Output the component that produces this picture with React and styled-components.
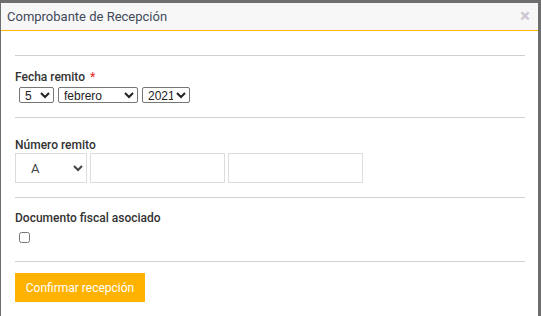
import React from 'react';
import styled, { createGlobalStyle } from 'styled-components';

const GlobalStyle = createGlobalStyle`
    html, body {
        margin: 0;
        padding: 0;
        height: 100%;
        background: #6e6e6e;
        overflow: hidden;
    }
    #root {
        height: 100%;
    }
`;

const Backdrop = styled.div`
    display: flex;
    height: 100%;
    padding: 3px 3px 0 1px;
    box-sizing: border-box;
`;

const Modal = styled.div`
    flex: 1;
    display: flex;
    flex-direction: column;
    background: #fff;
    font-family: Roboto, "Liberation Sans", sans-serif;
`;

const Header = styled.div`
    display: flex;
    align-items: center;
    justify-content: space-between;
    height: 27px;
    padding: 0 8px 0 6px;
    background: #f7f7f7;
    border-bottom: 1px solid #ffb400;
`;

const Title = styled.span`
    font-size: 13px;
    color: #3f4a5a;
`;

const Close = styled.span`
    font-size: 19px;
    font-weight: bold;
    line-height: 1;
    color: #cbc6d4;
    margin-top: -2px;
`;

const Body = styled.div`
    display: flex;
    flex-direction: column;
    align-items: flex-start;
    padding: 0 13px 0 14px;
`;

const Divider = styled.hr`
    align-self: stretch;
    border: none;
    border-top: 1px solid #d0d0d0;
    margin: ${p => p.$top || 0}px 0 0;
    height: 0;
`;

const Label = styled.label`
    display: block;
    margin-top: ${p => p.$top || 0}px;
    font-size: 12px;
    line-height: 14px;
    font-weight: 500;
    color: #333;
`;

const Required = styled.span`
    color: #e53935;
    margin-left: 5px;
`;

const DateRow = styled.div`
    display: flex;
    gap: 4px;
    margin: 3px 0 0 4px;
`;

const SmallSelect = styled.select`
    height: 16px;
    width: ${p => p.$width}px;
    padding: 0 0 0 1px;
    font-family: "Liberation Sans", Arial, sans-serif;
    font-size: 12px;
    color: #222;
    border: 1px solid #767676;
    border-radius: 2px;
    background: #fff;
`;

const NumberRow = styled.div`
    display: flex;
    gap: 3px;
    margin-top: 1px;
`;

const LetterSelect = styled.select`
    width: 72px;
    height: 30px;
    padding: 0 4px 0 11px;
    font-family: Roboto, sans-serif;
    font-size: 13px;
    color: #444;
    border: 1px solid #dcdcdc;
    border-radius: 0;
    background: #fff;
`;

const TextInput = styled.input`
    width: 135px;
    height: 30px;
    box-sizing: border-box;
    border: 1px solid #dcdcdc;
    padding: 0 6px;
    font-size: 13px;
`;

const Checkbox = styled.input`
    display: block;
    width: 11px;
    height: 11px;
    margin: 7px 0 18px 4px;
`;

const Button = styled.button`
    width: 130px;
    height: 29px;
    margin-top: 11px;
    border: none;
    background: #ffb300;
    color: #fff;
    font-family: Roboto, sans-serif;
    font-size: 12px;
    cursor: pointer;
`;

const MONTHS = ['enero', 'febrero', 'marzo', 'abril', 'mayo', 'junio', 'julio', 'agosto',
    'septiembre', 'octubre', 'noviembre', 'diciembre'];

export default function App() {
    return (
        <>
            <GlobalStyle />
            <Backdrop>
                <Modal>
                    <Header>
                        <Title>Comprobante de Recepción</Title>
                        <Close>×</Close>
                    </Header>
                    <Body>
                        <Divider $top={24} />
                        <Label $top={14}>
                            Fecha remito<Required>*</Required>
                        </Label>
                        <DateRow>
                            <SmallSelect $width={35} defaultValue="5">
                                {Array.from({ length: 31 }, (_, i) => (
                                    <option key={i} value={String(i + 1)}>{i + 1}</option>
                                ))}
                            </SmallSelect>
                            <SmallSelect $width={80} defaultValue="febrero">
                                {MONTHS.map(m => (
                                    <option key={m} value={m}>{m}</option>
                                ))}
                            </SmallSelect>
                            <SmallSelect $width={48} defaultValue="2021">
                                <option value="2020">2020</option>
                                <option value="2021">2021</option>
                                <option value="2022">2022</option>
                            </SmallSelect>
                        </DateRow>
                        <Divider $top={14} />
                        <Label $top={20}>Número remito</Label>
                        <NumberRow>
                            <LetterSelect defaultValue="A">
                                <option value="A">A</option>
                                <option value="B">B</option>
                                <option value="C">C</option>
                            </LetterSelect>
                            <TextInput type="text" />
                            <TextInput type="text" />
                        </NumberRow>
                        <Divider $top={14} />
                        <Label $top={13}>Documento fiscal asociado</Label>
                        <Checkbox type="checkbox" />
                        <Divider />
                        <Button>Confirmar recepción</Button>
                    </Body>
                </Modal>
            </Backdrop>
        </>
    );
}
